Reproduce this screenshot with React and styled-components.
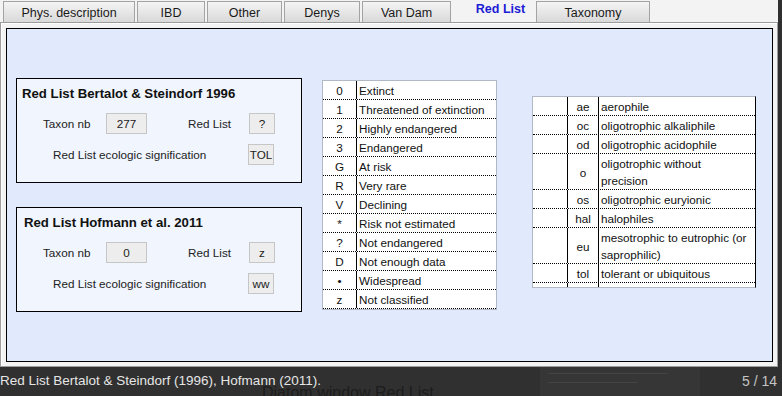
import React from 'react';
import styled, { createGlobalStyle } from 'styled-components';

const GlobalStyle = createGlobalStyle`
	body {
		margin: 0;
		background: #2f2f2f;
		font-family: 'Liberation Sans', Arial, sans-serif;
	}
`;

const Page = styled.div`
	width: 782px;
	height: 396px;
	overflow: hidden;
	display: flex;
	flex-direction: column;
`;

const Window = styled.div`
	width: 778px;
	height: 367px;
	background: #f3f3f3;
	display: flex;
	flex-direction: column;
`;

const TabBar = styled.div`
	display: flex;
	align-items: flex-end;
	gap: 2px;
	padding-left: 3px;
	height: 22px;
`;

const Tab = styled.div`
	width: ${(p) => p.w}px;
	height: 21px;
	box-sizing: border-box;
	border: 1px solid ${(p) => (p.active ? 'transparent' : '#a3a3a3')};
	border-bottom: none;
	background: ${(p) =>
		p.active ? '#f3f3f3' : 'linear-gradient(#f4f4f4, #d9d9d9)'};
	color: ${(p) => (p.active ? '#1c1cd6' : '#1a1a1a')};
	font-size: 12.5px;
	font-weight: ${(p) => (p.active ? 'bold' : 'normal')};
	text-align: center;
	padding-left: ${(p) => (p.active ? 14 : 0)}px;
	line-height: ${(p) => (p.active ? '17px' : '22px')};
	align-self: ${(p) => (p.active ? 'flex-start' : 'auto')};
`;

const Frame = styled.div`
	flex: 1;
	border: 1px solid #9c9c9c;
	box-shadow: inset 1px 1px 0 #fff;
	padding: 5px 4px 4px 5px;
	display: flex;
`;

const Sheet = styled.div`
	flex: 1;
	border: 1px solid #000;
	background: #e1eafc;
	display: flex;
	align-items: flex-start;
	padding-left: 9px;
`;

const Column = styled.div`
	display: flex;
	flex-direction: column;
	gap: 24px;
	margin-top: ${(p) => p.top}px;
	margin-right: ${(p) => p.gap || 0}px;
`;

const Group = styled.div`
	width: 286px;
	height: 105px;
	box-sizing: border-box;
	border: 1px solid #000;
	background: #f0f5fe;
	padding: 7px 0 0 0;
	font-size: 11.7px;
	color: #222;
`;

const GroupTitle = styled.div`
	font-size: 13.2px;
	font-weight: bold;
	color: #111;
	padding-left: ${(p) => p.indent}px;
	line-height: 16px;
	margin-bottom: 11px;
`;

const Row = styled.div`
	display: flex;
	align-items: center;
	padding-left: ${(p) => p.indent}px;
	margin-bottom: ${(p) => p.after || 0}px;
`;

const Label = styled.div`
	width: ${(p) => p.w}px;
	text-align: ${(p) => p.align || 'left'};
	padding-right: ${(p) => p.pr || 0}px;
	box-sizing: border-box;
`;

const Field = styled.div`
	width: ${(p) => p.w}px;
	height: 21px;
	box-sizing: border-box;
	border: 1px solid #c6c6c6;
	background: #ededed;
	text-align: center;
	line-height: 19px;
`;

const Table = styled.div`
	width: ${(p) => p.w}px;
	box-sizing: border-box;
	background: #fff;
	border: 1px solid #b1b9c6;
	border-right-color: ${(p) => p.edge || '#b1b9c6'};
	height: ${(p) => (p.h ? p.h + 'px' : 'auto')};
	overflow: hidden;
	font-size: 11.7px;
	color: #111;
`;

const TRow = styled.div`
	display: flex;
	border-bottom: 1px dotted #000;
	line-height: 17px;
	padding-top: 1px;
`;

const Cell = styled.div`
	width: ${(p) => (p.w ? p.w + 'px' : 'auto')};
	flex: ${(p) => (p.w ? 'none' : 1)};
	box-sizing: border-box;
	padding-left: ${(p) => (p.center ? 0 : 2)}px;
	padding-right: ${(p) => (p.center ? 0 : 4)}px;
	border-left: ${(p) => (p.line ? '1px solid #000' : 'none')};
	margin-top: -1px;
	padding-top: 1px;
	display: flex;
	align-items: center;
	justify-content: ${(p) => (p.center ? 'center' : 'flex-start')};
`;

const Caption = styled.div`
	flex: 1;
	position: relative;
	display: flex;
	align-items: center;
	justify-content: space-between;
	padding-right: 5px;
	background: #303030;
	color: #e6e6e6;
	font-size: 13.5px;
	overflow: hidden;
`;

const CaptionText = styled.span`
	position: relative;
	z-index: 1;
	margin-top: -2px;
`;

const Counter = styled.span`
	position: relative;
	z-index: 1;
	color: #c4c4c4;
	font-size: 14px;
	margin-top: -2px;
`;

const GhostTitle = styled.div`
	position: absolute;
	left: 262px;
	top: 17px;
	font-size: 16px;
	color: #1d1d1d;
`;

const GhostShot = styled.div`
	position: absolute;
	left: 540px;
	top: 0;
	width: 160px;
	height: 29px;
	background: #363636;
	display: flex;
	flex-direction: column;
	gap: 8px;
	padding: 6px 8px;
	box-sizing: border-box;
`;

const GhostLine = styled.div`
	height: 1px;
	width: ${(p) => p.w}px;
	background: #444;
`;

const tabs = [
	['Phys. description', 132],
	['IBD', 68],
	['Other', 75],
	['Denys', 76],
	['Van Dam', 89],
	['Red List', 81],
	['Taxonomy', 114],
];

const redList = [
	['0', 'Extinct'],
	['1', 'Threatened of extinction'],
	['2', 'Highly endangered'],
	['3', 'Endangered'],
	['G', 'At risk'],
	['R', 'Very rare'],
	['V', 'Declining'],
	['*', 'Risk not estimated'],
	['?', 'Not endangered'],
	['D', 'Not enough data'],
	['•', 'Widespread'],
	['z', 'Not classified'],
];

const ecologic = [
	['ae', 'aerophile'],
	['oc', 'oligotrophic alkaliphile'],
	['od', 'oligotrophic acidophile'],
	['o', 'oligotrophic without precision'],
	['os', 'oligotrophic euryionic'],
	['hal', 'halophiles'],
	['eu', 'mesotrophic to eutrophic (or saprophilic)'],
	['tol', 'tolerant or ubiquitous'],
	['ww', 'without signification'],
];

const RedListGroup = ({ title, indent, taxon, list, eco }) => (
	<Group>
		<GroupTitle indent={indent}>{title}</GroupTitle>
		<Row indent={26} after={10}>
			<Label w={63}>Taxon nb</Label>
			<Field w={41}>{taxon}</Field>
			<Label w={102} align="right" pr={18}>
				Red List
			</Label>
			<Field w={26}>{list}</Field>
		</Row>
		<Row indent={36}>
			<Label w={195}>Red List ecologic signification</Label>
			<Field w={26}>{eco}</Field>
		</Row>
	</Group>
);

const App = () => {
	return (
		<Page>
			<GlobalStyle />
			<Window>
				<TabBar>
					{tabs.map(([name, w]) => (
						<Tab key={name} w={w} active={name === 'Red List'}>
							{name}
						</Tab>
					))}
				</TabBar>
				<Frame>
					<Sheet>
						<Column top={49} gap={20}>
							<RedListGroup
								title="Red List Bertalot & Steindorf 1996"
								indent={5}
								taxon="277"
								list="?"
								eco="TOL"
							/>
							<RedListGroup
								title="Red List Hofmann et al. 2011"
								indent={7}
								taxon="0"
								list="z"
								eco="ww"
							/>
						</Column>
						<Column top={51} gap={35}>
							<Table w={175}>
								{redList.map(([code, text]) => (
									<TRow key={code}>
										<Cell w={33} center>
											{code}
										</Cell>
										<Cell line>{text}</Cell>
									</TRow>
								))}
							</Table>
						</Column>
						<Column top={67}>
							<Table w={224} h={192} edge="#000">
								{ecologic.map(([code, text]) => (
									<TRow key={code}>
										<Cell w={34} />
										<Cell w={31} line center>
											{code}
										</Cell>
										<Cell line>{text}</Cell>
									</TRow>
								))}
							</Table>
						</Column>
					</Sheet>
				</Frame>
			</Window>
			<Caption>
				<GhostShot>
					<GhostLine w={120} />
					<GhostLine w={90} />
				</GhostShot>
				<GhostTitle>Diatom window Red List</GhostTitle>
				<CaptionText>Red List Bertalot &amp; Steindorf (1996), Hofmann (2011).</CaptionText>
				<Counter>5 / 14</Counter>
			</Caption>
		</Page>
	);
};

export default App;
